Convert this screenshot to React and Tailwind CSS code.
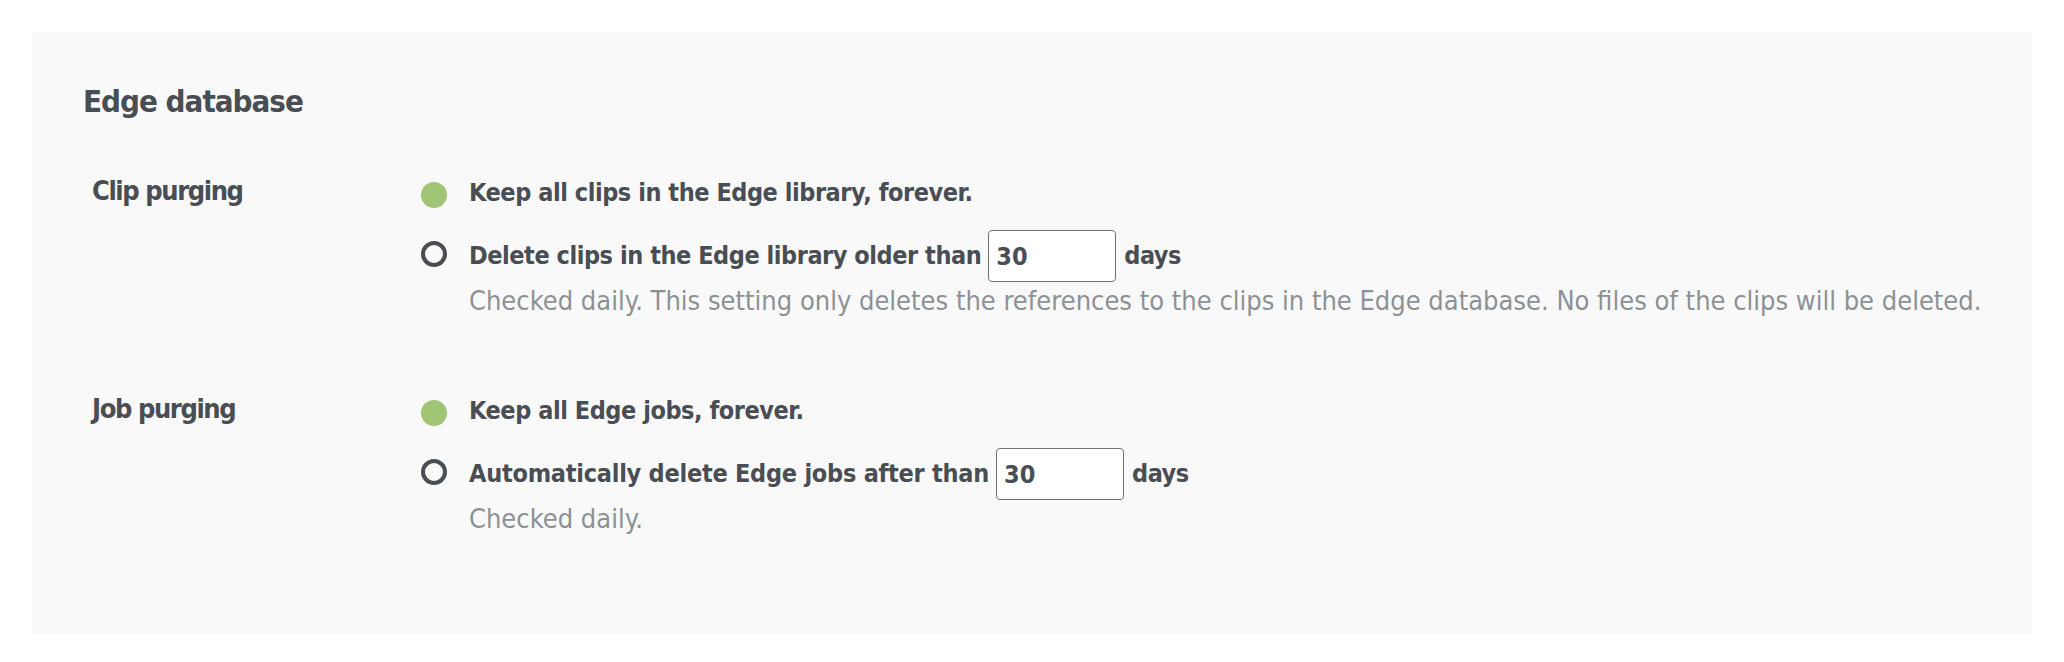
const font = "font-['DejaVu_Sans_Condensed','DejaVu_Sans',sans-serif]"

export default function App() {
  return (
    <div className={`min-h-screen bg-white pt-[32px] pl-[32px] pr-[32px] ${font}`}>
      <section className="bg-[#f9f9f9] h-[602px] pt-[49px]">
        <h2 className="pl-[51px] text-[31px] tracking-[-1px] leading-[40px] font-bold text-[#494e55]">Edge database</h2>

        <div className="pl-[60px] mt-[52px] flex flex-col gap-[72px]">
          <SettingGroup
            label="Clip purging"
            keepText="Keep all clips in the Edge library, forever."
            deleteText="Delete clips in the Edge library older than"
            note="Checked daily. This setting only deletes the references to the clips in the Edge database. No files of the clips will be deleted."
          />
          <SettingGroup
            label="Job purging"
            keepText="Keep all Edge jobs, forever."
            deleteText="Automatically delete Edge jobs after than"
            wide
            note="Checked daily."
          />
        </div>
      </section>
    </div>
  )
}

function SettingGroup({ label, keepText, deleteText, note, wide }) {
  return (
    <div className="flex">
      <div className="w-[329px] shrink-0 text-[27px] tracking-[-1.4px] leading-[36px] font-bold text-[#494e55]">{label}</div>
      <div className="flex flex-col">
        <div className="flex items-center gap-[22px] h-[40px]">
          <span className="w-[26px] h-[26px] rounded-full bg-[#a0c575] shrink-0 mt-[3px]"></span>
          <span className="text-[25px] tracking-[-0.45px] leading-[40px] font-bold text-[#494e55]">{keepText}</span>
        </div>
        <div className="flex items-center gap-[22px] h-[52px] mt-[17px]">
          <span className="w-[26px] h-[26px] rounded-full border-[4px] border-[#494e55] shrink-0 -mt-[4px]"></span>
          <div className="flex items-center text-[25px] leading-[40px] font-bold text-[#494e55]">
            <span className={wide ? "tracking-[-0.25px]" : "tracking-[-0.45px]"}>{deleteText}</span>
            <input
              type="text"
              defaultValue="30"
              className="ml-[7px] w-[128px] h-[52px] bg-white border-[1.5px] border-[#717171] rounded-[4px] pl-[7px] text-[25px] font-bold text-[#494e55] outline-none"
            />
            <span className="ml-[8px] tracking-[-0.45px]">days</span>
          </div>
        </div>
        <p className="ml-[48px] mt-[1px] text-[27px] leading-[36px] text-[#8d9195] whitespace-nowrap">{note}</p>
      </div>
    </div>
  )
}
